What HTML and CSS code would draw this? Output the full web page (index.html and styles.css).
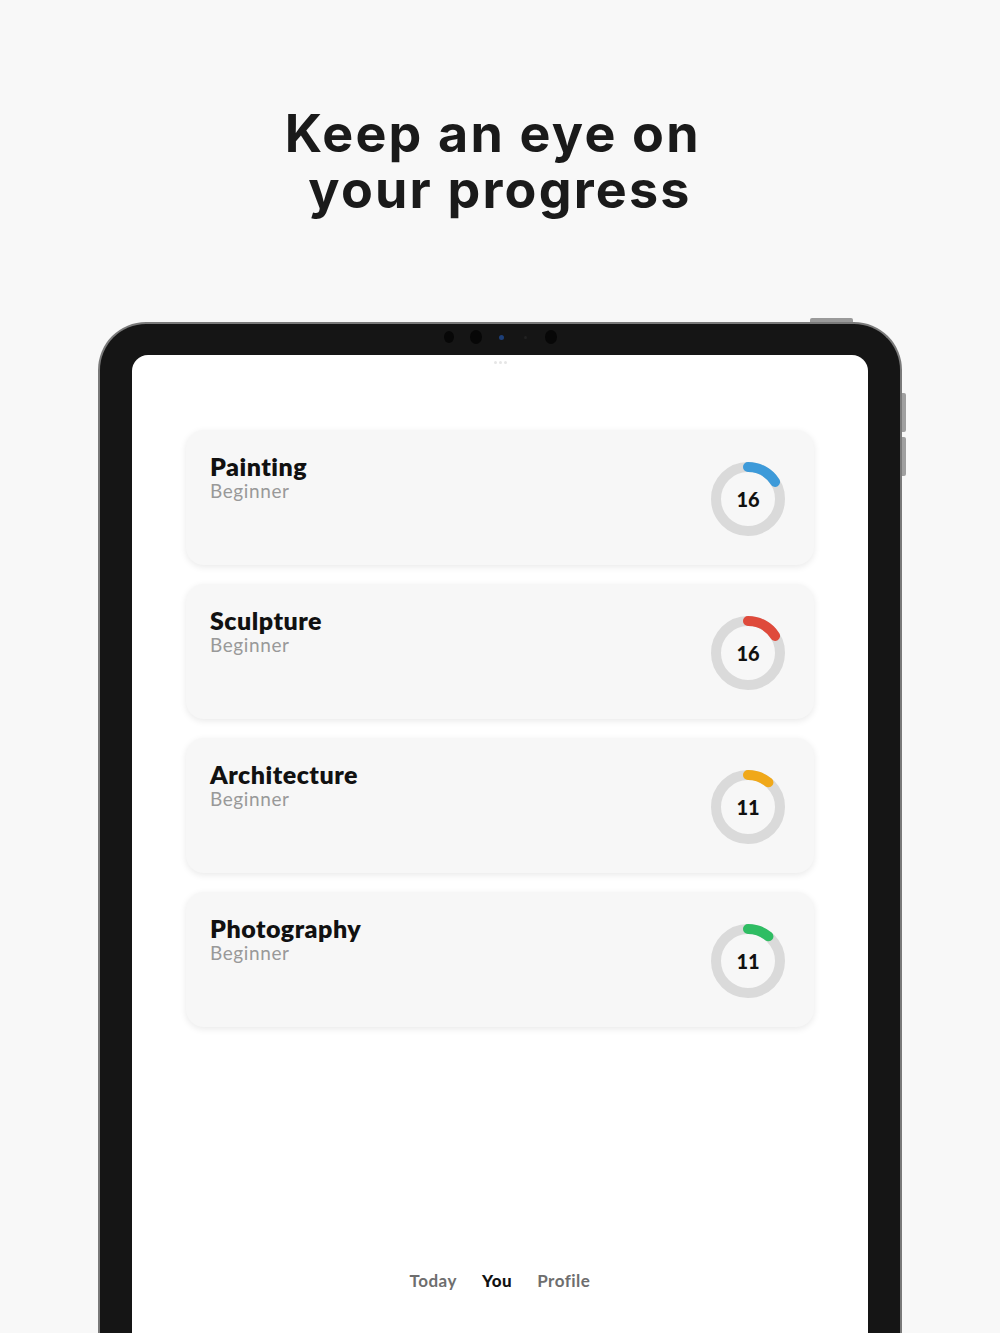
FILE: index.html
```html
<!DOCTYPE html>
<html lang="en">
<head>
    <meta charset="UTF-8">
    <meta name="viewport" content="width=device-width, initial-scale=1.0">
    <title>Keep an eye on your progress</title>
    <link rel="stylesheet" href="styles.css">
</head>
<body>
    <div class="page">
        <h1 class="headline">Keep an eye on&nbsp;<br>your progress</h1>

        <div class="device">
            <span class="btn-top"></span>
            <span class="btn-side btn-side-1"></span>
            <span class="btn-side btn-side-2"></span>

            <div class="camera">
                <span class="lens lens-a"></span>
                <span class="lens lens-b"></span>
                <span class="lens lens-c"></span>
                <span class="lens lens-d"></span>
                <span class="lens lens-e"></span>
            </div>

            <div class="screen">
                <div class="grabber"><i></i><i></i><i></i></div>

                <div class="cards">
                    <div class="card">
                        <div class="card-text">
                            <div class="card-title">Painting</div>
                            <div class="card-level">Beginner</div>
                        </div>
                        <div class="ring">
                            <svg width="74" height="74" viewBox="0 0 74 74">
                                <circle class="ring-track" cx="37" cy="37" r="32"/>
                                <circle class="ring-bar" cx="37" cy="37" r="32" stroke="#3d9ad9" stroke-dasharray="32.17 201.06" transform="rotate(-90 37 37)"/>
                            </svg>
                            <span class="ring-value">16</span>
                        </div>
                    </div>

                    <div class="card">
                        <div class="card-text">
                            <div class="card-title">Sculpture</div>
                            <div class="card-level">Beginner</div>
                        </div>
                        <div class="ring">
                            <svg width="74" height="74" viewBox="0 0 74 74">
                                <circle class="ring-track" cx="37" cy="37" r="32"/>
                                <circle class="ring-bar" cx="37" cy="37" r="32" stroke="#df4a3b" stroke-dasharray="32.17 201.06" transform="rotate(-90 37 37)"/>
                            </svg>
                            <span class="ring-value">16</span>
                        </div>
                    </div>

                    <div class="card">
                        <div class="card-text">
                            <div class="card-title">Architecture</div>
                            <div class="card-level">Beginner</div>
                        </div>
                        <div class="ring">
                            <svg width="74" height="74" viewBox="0 0 74 74">
                                <circle class="ring-track" cx="37" cy="37" r="32"/>
                                <circle class="ring-bar" cx="37" cy="37" r="32" stroke="#f0a819" stroke-dasharray="22.12 201.06" transform="rotate(-90 37 37)"/>
                            </svg>
                            <span class="ring-value">11</span>
                        </div>
                    </div>

                    <div class="card">
                        <div class="card-text">
                            <div class="card-title">Photography</div>
                            <div class="card-level">Beginner</div>
                        </div>
                        <div class="ring">
                            <svg width="74" height="74" viewBox="0 0 74 74">
                                <circle class="ring-track" cx="37" cy="37" r="32"/>
                                <circle class="ring-bar" cx="37" cy="37" r="32" stroke="#2fbd63" stroke-dasharray="22.12 201.06" transform="rotate(-90 37 37)"/>
                            </svg>
                            <span class="ring-value">11</span>
                        </div>
                    </div>
                </div>

                <div class="tabbar">
                    <span class="tab">Today</span>
                    <span class="tab tab-active">You</span>
                    <span class="tab">Profile</span>
                </div>
            </div>
        </div>
    </div>
</body>
</html>
```

FILE: styles.css
```css
* { margin: 0; padding: 0; box-sizing: border-box; }
html, body { height: 1333px; overflow: hidden; }
body { background: #f8f8f8; font-family: Lato, "Noto Sans", sans-serif; color: #111; }

.page { padding-top: 106px; }
.headline { font-family: Inter, "Liberation Sans", sans-serif; font-weight: 700; font-size: 52px; line-height: 56px; letter-spacing: 2.2px; text-align: center; color: #1a1a1a; }

/* tablet frame */
.device { position: relative; width: 804px; height: 1011px; margin: 104px auto 0; padding: 31px 32px 0; background: #151515; border: 2px solid #7a7a7a; border-bottom: none; border-radius: 48px 48px 0 0; }
.btn-top { position: absolute; top: -6px; right: 47px; width: 43px; height: 4px; background: #9a9a9a; border-radius: 2px 2px 0 0; }
.btn-side { position: absolute; right: -6px; width: 4px; height: 39px; background: #a0a0a0; border-radius: 0 2px 2px 0; }
.btn-side-1 { top: 69px; }
.btn-side-2 { top: 113px; }

.camera { position: absolute; top: 6px; left: 0; right: 0; display: flex; justify-content: center; align-items: center; }
.lens { display: block; border-radius: 50%; background: #070707; }
.lens-a { width: 10px; height: 12px; }
.lens-b { width: 12px; height: 14px; margin-left: 16px; }
.lens-c { width: 5px; height: 5px; margin-left: 17px; background: #1d3f78; }
.lens-d { width: 3px; height: 3px; margin-left: 20px; background: #222; }
.lens-e { width: 12px; height: 14px; margin-left: 18px; }

.screen { height: 100%; background: #fff; border-radius: 16px 16px 0 0; padding: 6px 54px 0; }
.grabber { display: flex; justify-content: center; gap: 2px; height: 4px; }
.grabber i { display: block; width: 3px; height: 3px; border-radius: 50%; background: #e6e6e6; }

.cards { display: flex; flex-direction: column; gap: 19px; margin-top: 65px; }
.card { display: flex; justify-content: space-between; align-items: flex-start; height: 135px; padding: 22px 29px 0 24px; background: #f7f7f7; border-radius: 18px; box-shadow: 0 2px 7px rgba(0,0,0,0.09); }
.card-title { font-size: 25px; line-height: 28px; font-weight: 800; letter-spacing: 0.5px; color: #111; }
.card-level { font-size: 19px; line-height: 22px; font-weight: 400; letter-spacing: 0.6px; color: #999; }

.ring { position: relative; width: 74px; height: 74px; margin-top: 10px; }
.ring svg { display: block; }
.ring-track { fill: none; stroke: #dadada; stroke-width: 10; }
.ring-bar { fill: none; stroke-width: 10; stroke-linecap: round; }
.ring-value { position: absolute; top: 0; left: 0; right: 0; bottom: 0; display: flex; align-items: center; justify-content: center; font-size: 20px; font-weight: 900; color: #111; }

.tabbar { display: flex; justify-content: center; gap: 25px; margin-top: 242px; font-size: 17px; line-height: 24px; letter-spacing: 0.5px; }
.tab { color: #6e6e6e; font-weight: 700; }
.tab-active { color: #111; font-weight: 900; }
```
